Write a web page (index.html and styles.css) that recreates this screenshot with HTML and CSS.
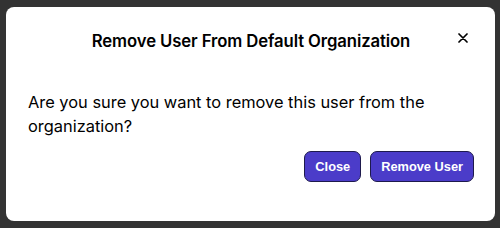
FILE: index.html
```html
<!DOCTYPE html>
<html lang="en">
<head>
  <meta charset="UTF-8" />
  <meta name="viewport" content="width=device-width, initial-scale=1.0"/>
  <title>Remove User</title>
  <link rel="stylesheet" href="styles.css">
</head>
<body>
  <div class="modal">
    <!-- Header -->
    <div class="modal-header">
      <span></span>
      <h2 class="modal-title">Remove User From Default Organization</h2>
      <button class="close-x" aria-label="Close">
        <svg viewBox="0 0 10 10" width="10" height="10">
          <path d="M1 1 L9 9 M9 1 L1 9" stroke="#000" stroke-width="1.7" stroke-linecap="round" fill="none" />
        </svg>
      </button>
    </div>

    <!-- Body -->
    <div class="modal-body">
      <p>Are you sure you want to remove this user from the organization?</p>
    </div>

    <!-- Footer -->
    <div class="modal-footer">
      <button class="btn">Close</button>
      <button class="btn">Remove User</button>
    </div>
  </div>
</body>
</html>
```

FILE: styles.css
```css
html, body {
  margin: 0;
  height: 100%;
}

body {
  background-color: #333333;
  font-family: Inter, "Noto Sans", sans-serif;
  color: #000;
  padding: 7px 5px 7px 6px;
  box-sizing: border-box;
}

.modal {
  background-color: #fff;
  border-radius: 8px;
  height: 214px;
  box-sizing: border-box;
  padding: 22px 21px 0 22px;
}

.modal-header {
  display: grid;
  grid-template-columns: 1fr auto 1fr;
  align-items: center;
}

.modal-title {
  margin: 0;
  font-size: 16.7px;
  font-weight: 600;
  line-height: 24px;
  letter-spacing: -0.1px;
}

.close-x {
  justify-self: end;
  margin-right: 6px;
  margin-top: -7px;
  background: none;
  border: none;
  padding: 0;
  width: 10px;
  height: 10px;
  display: flex;
}

.modal-body {
  margin-top: 37px;
}

.modal-body p {
  margin: 0;
  font-size: 16.4px;
  line-height: 24px;
  max-width: 440px;
}

.modal-footer {
  display: flex;
  justify-content: flex-end;
  gap: 9px;
  margin-top: 13px;
}

.btn {
  font-family: "Liberation Sans", Arial, sans-serif;
  font-weight: bold;
  font-size: 12.8px;
  color: #fff;
  background-color: #4b3cc9;
  border: 1px solid #1e1a4d;
  border-radius: 7px;
  height: 31px;
  padding: 0 10px;
}
```
